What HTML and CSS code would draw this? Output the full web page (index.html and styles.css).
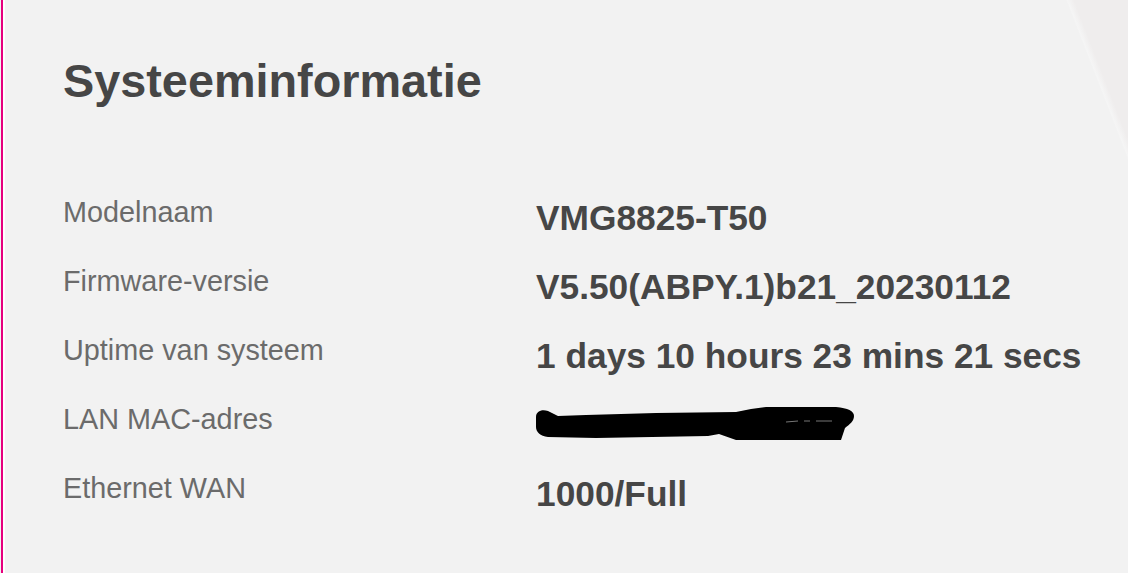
FILE: index.html
```html
<!DOCTYPE html>
<html lang="nl">
<head>
  <meta charset="UTF-8" />
  <meta name="viewport" content="width=device-width, initial-scale=1" />
  <title>Systeeminformatie</title>
  <link rel="stylesheet" href="styles.css">
</head>
<body>

<div class="panel">
  <h1 class="title">Systeeminformatie</h1>

  <dl class="info">
    <dt class="label">Modelnaam</dt>
    <dd class="val">VMG8825-T50</dd>

    <dt class="label">Firmware-versie</dt>
    <dd class="val">V5.50(ABPY.1)b21_20230112</dd>

    <dt class="label">Uptime van systeem</dt>
    <dd class="val">1 days 10 hours 23 mins 21 secs</dd>

    <dt class="label">LAN MAC-adres</dt>
    <dd class="val">
      <!-- adres is weggelakt -->
      <svg class="redacted" width="320" height="38" viewBox="0 0 320 38">
        <path d="M0,12 C0,6 6,4 12,6 L22,11 L50,10 L120,8 L200,7 L215,4 L230,2 L300,2 C312,3 318,6 318,11 C318,16 314,19 309,23 L305,35 L200,35 L183,29 L172,31 L60,33 L12,32 C4,31 0,27 0,22 Z" fill="#000"/>
        <path d="M250,17 L262,16 M268,16 L274,16 M280,16 L296,16" stroke="#777" stroke-width="1"/>
      </svg>
    </dd>

    <dt class="label">Ethernet WAN</dt>
    <dd class="val">1000/Full</dd>
  </dl>
</div>

</body>
</html>
```

FILE: styles.css
```css
html {
  height: 100%;
  background: linear-gradient(68.8deg, #f2f2f2 95.4%, #f5f5f5 95.5%, #efeded 96%);
}
body {
  margin: 0;
  height: 100%;
  font-family: "Liberation Sans", Arial, sans-serif;
  color: #464646;
}
.panel {
  margin-left: 1px;
  height: 100%;
  box-sizing: border-box;
  border-left: 2px solid #e6007e;
  box-shadow: inset 2px 0 #fff;
  padding: 58px 0 0 60px;
}
.title {
  margin: 0 0 87px;
  font-size: 46.8px;
  line-height: 1;
  font-weight: bold;
  color: #464646;
}
.info {
  margin: 0;
  display: grid;
  grid-template-columns: 473px 1fr;
  row-gap: 17px;
  align-items: start;
}
.label {
  font-size: 28.8px;
  line-height: 40px;
  color: #6b6b6b;
}
.val {
  margin: 0;
  height: 52px;
  font-size: 35.3px;
  line-height: 52px;
  font-weight: bold;
  white-space: nowrap;
  color: #464646;
}
.redacted {
  display: block;
  margin-top: 6px;
}
```
